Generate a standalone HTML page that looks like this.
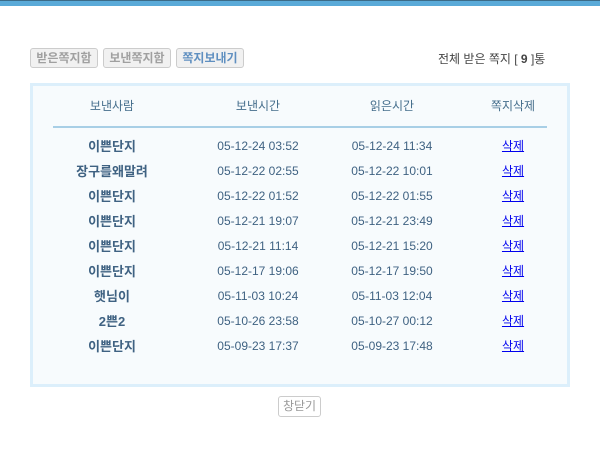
<!DOCTYPE html>
<html><head><meta charset="utf-8"><style>
body{margin:0;width:600px;height:461px;background:#fff;font-family:"Liberation Sans","Noto Sans CJK KR","NanumGothic",sans-serif;font-size:12px;position:relative;overflow:hidden}
.top{position:absolute;left:0;top:0;width:600px;height:6px;background:#5aaad8;border-top:1px solid #3b6b88;box-sizing:border-box}
.btn{position:absolute;top:48px;height:20px;border:1px solid #ccc;border-radius:3px;background:#f1f1f1;box-sizing:border-box;color:#a0a0a0;font-weight:bold;font-size:12px;line-height:18px;text-align:center}
.box{position:absolute;left:30px;top:83px;width:540px;height:304px;border:3px solid #dcefFb;background:#f7fbfd;box-sizing:border-box}
.line{position:absolute;left:53px;top:126px;width:494px;height:2px;background:#a8cfe6}
.c{position:absolute;transform:translateX(-50%);white-space:nowrap;color:#3f6282}
.n{font-weight:bold;font-size:13px;margin-top:-2px}
.t{margin-top:1px}
.d{color:#0000ee;text-decoration:underline}
</style></head><body>
<div class="top"></div>
<div class="btn" style="left:30px;width:68px">받은쪽지함</div>
<div class="btn" style="left:103px;width:68px">보낸쪽지함</div>
<div class="btn" style="left:176px;width:68px;color:#5f8fc0">쪽지보내기</div>
<div style="position:absolute;left:438px;top:50px;color:#444">전체 받은 쪽지 [ <b>9</b> ]통</div>
<div class="box"></div>
<div class="c" style="left:112px;top:97px;color:#456e8c">보낸사람</div>
<div class="c" style="left:258px;top:97px;color:#456e8c">보낸시간</div>
<div class="c" style="left:392px;top:97px;color:#456e8c">읽은시간</div>
<div class="c" style="left:513px;top:97px;color:#456e8c">쪽지삭제</div>
<div class="line"></div>
<div class="c n" style="left:112px;top:138px">이쁜단지</div><div class="c t" style="left:258px;top:138px">05-12-24 03:52</div><div class="c t" style="left:392px;top:138px">05-12-24 11:34</div><div class="c d" style="left:513px;top:137px">삭제</div>
<div class="c n" style="left:112px;top:163px">장구를왜말려</div><div class="c t" style="left:258px;top:163px">05-12-22 02:55</div><div class="c t" style="left:392px;top:163px">05-12-22 10:01</div><div class="c d" style="left:513px;top:162px">삭제</div>
<div class="c n" style="left:112px;top:188px">이쁜단지</div><div class="c t" style="left:258px;top:188px">05-12-22 01:52</div><div class="c t" style="left:392px;top:188px">05-12-22 01:55</div><div class="c d" style="left:513px;top:187px">삭제</div>
<div class="c n" style="left:112px;top:213px">이쁜단지</div><div class="c t" style="left:258px;top:213px">05-12-21 19:07</div><div class="c t" style="left:392px;top:213px">05-12-21 23:49</div><div class="c d" style="left:513px;top:212px">삭제</div>
<div class="c n" style="left:112px;top:238px">이쁜단지</div><div class="c t" style="left:258px;top:238px">05-12-21 11:14</div><div class="c t" style="left:392px;top:238px">05-12-21 15:20</div><div class="c d" style="left:513px;top:237px">삭제</div>
<div class="c n" style="left:112px;top:263px">이쁜단지</div><div class="c t" style="left:258px;top:263px">05-12-17 19:06</div><div class="c t" style="left:392px;top:263px">05-12-17 19:50</div><div class="c d" style="left:513px;top:262px">삭제</div>
<div class="c n" style="left:112px;top:288px">햇님이</div><div class="c t" style="left:258px;top:288px">05-11-03 10:24</div><div class="c t" style="left:392px;top:288px">05-11-03 12:04</div><div class="c d" style="left:513px;top:287px">삭제</div>
<div class="c n" style="left:112px;top:313px">2쁜2</div><div class="c t" style="left:258px;top:313px">05-10-26 23:58</div><div class="c t" style="left:392px;top:313px">05-10-27 00:12</div><div class="c d" style="left:513px;top:312px">삭제</div>
<div class="c n" style="left:112px;top:338px">이쁜단지</div><div class="c t" style="left:258px;top:338px">05-09-23 17:37</div><div class="c t" style="left:392px;top:338px">05-09-23 17:48</div><div class="c d" style="left:513px;top:337px">삭제</div>
<div style="position:absolute;left:278px;top:396px;width:43px;height:21px;border:1px solid #ccc;border-radius:3px;box-sizing:border-box;color:#999;line-height:19px;text-align:center">창닫기</div>
</body></html>
